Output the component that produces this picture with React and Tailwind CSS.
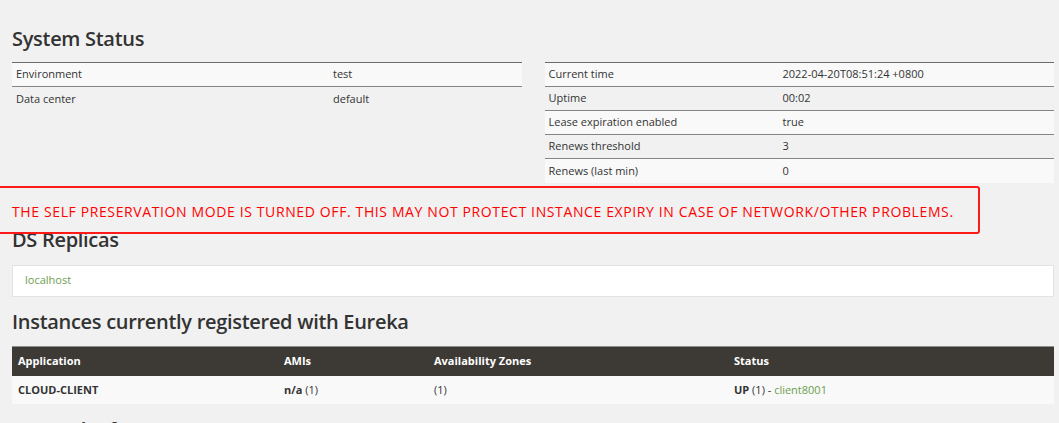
import React from "react";

const body = { fontFamily: '"Open Sans", "Noto Sans", sans-serif' };
const head = { fontFamily: '"Open Sans", "Noto Sans", sans-serif' };

function KV({ rows, labelW }) {
  return (
    <table className="w-full border-collapse text-[11px] text-[#333]" style={body}>
      <tbody>
        {rows.map(([k, v], i) => (
          <tr key={k} className={i % 2 === 0 ? "bg-[#f9f9f9]" : ""}>
            <td
              className={`h-[24px] px-[4px] py-0 align-middle border-t ${i === 0 ? "border-[#6b6b6b]" : "border-[#858585]"}`}
              style={{ width: labelW }}
            >
              {k}
            </td>
            <td className={`h-[24px] px-[4px] py-0 align-middle border-t ${i === 0 ? "border-[#6b6b6b]" : "border-[#858585]"}`}>
              {v}
            </td>
          </tr>
        ))}
      </tbody>
    </table>
  );
}

function H2({ children, className }) {
  return (
    <h2 className={`text-[20px] leading-[24px] font-semibold tracking-[-0.3px] text-[#333] ${className}`} style={head}>
      {children}
    </h2>
  );
}

export default function App() {
  return (
    <div className="relative min-h-[423px] bg-[#f1f1f1] pl-[12px] pr-[5px] pt-[27px] pb-[40px]" style={body}>
      <H2>System Status</H2>
      <div className="mt-[11px] grid grid-cols-2 gap-[23px] items-start">
        <KV
          labelW="317px"
          rows={[
            ["Environment", "test"],
            ["Data center", "default"],
          ]}
        />
        <KV
          labelW="234px"
          rows={[
            ["Current time", "2022-04-20T08:51:24 +0800"],
            ["Uptime", "00:02"],
            ["Lease expiration enabled", "true"],
            ["Renews threshold", "3"],
            ["Renews (last min)", "0"],
          ]}
        />
      </div>

      <div className="mt-[19px] text-[14px] leading-[20px] tracking-[0.62px] text-[#ff0000] uppercase" style={body}>
        THE SELF PRESERVATION MODE IS TURNED OFF. THIS MAY NOT PROTECT INSTANCE EXPIRY IN CASE OF NETWORK/OTHER PROBLEMS.
      </div>

      <H2 className="mt-[6px]">DS Replicas</H2>
      <div className="mt-[13px] h-[32px] flex items-center bg-white border border-[#e3e3e3] pl-[12px] text-[11px] text-[#6e9e4f]">
        localhost
      </div>

      <H2 className="mt-[13px]">Instances currently registered with Eureka</H2>
      <table className="mt-[12px] w-full border-collapse text-[11px] text-[#333]" style={body}>
        <thead>
          <tr className="bg-[#3d3a35] text-white font-bold">
            <th className="h-[30px] px-[6px] py-0 text-left align-middle border-t border-[#8f8f8f] w-[266px]">Application</th>
            <th className="h-[30px] px-[6px] py-0 text-left align-middle border-t border-[#8f8f8f] w-[150px]">AMIs</th>
            <th className="h-[30px] px-[6px] py-0 text-left align-middle border-t border-[#8f8f8f] w-[300px]">Availability Zones</th>
            <th className="h-[30px] px-[6px] py-0 text-left align-middle border-t border-[#8f8f8f]">Status</th>
          </tr>
        </thead>
        <tbody>
          <tr className="bg-[#f9f9f9]">
            <td className="h-[28px] px-[6px] py-0 align-middle font-bold">CLOUD-CLIENT</td>
            <td className="h-[28px] px-[6px] py-0 align-middle">
              <b>n/a</b> (1)
            </td>
            <td className="h-[28px] px-[6px] py-0 align-middle">(1)</td>
            <td className="h-[28px] px-[6px] py-0 align-middle">
              <b>UP</b> (1) - <span className="text-[#6e9e4f]">client8001</span>
            </td>
          </tr>
        </tbody>
      </table>

      <H2 className="mt-[14px]">General Info</H2>

      <div className="pointer-events-none absolute left-[-3px] top-[186px] w-[983px] h-[48px] border-2 border-[#ff1a1a] rounded-[3px]"></div>
    </div>
  );
}
